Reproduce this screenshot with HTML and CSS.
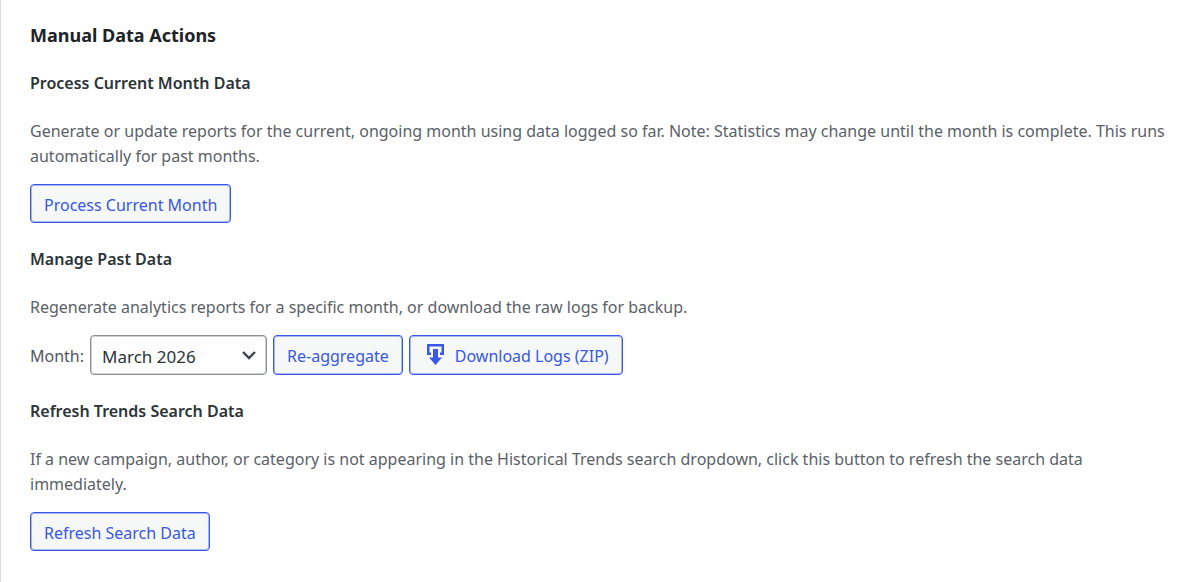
FILE: index.html
```html
<!DOCTYPE html>
<html lang="en">
<head>
<meta charset="utf-8">
<meta name="viewport" content="width=device-width, initial-scale=1">
<title>Manual Data Actions</title>
<link rel="stylesheet" href="styles.css">
</head>
<body>
<main class="panel">
  <h2 class="panel-title">Manual Data Actions</h2>
  <section class="section">
    <h3 class="section-title">Process Current Month Data</h3>
    <p class="text">Generate or update reports for the current, ongoing month using data logged so far. Note: Statistics may change until the month is complete. This runs automatically for past months.</p>
    <button class="button" type="button">Process Current Month</button>
  </section>
  <section class="section">
    <h3 class="section-title">Manage Past Data</h3>
    <p class="text">Regenerate analytics reports for a specific month, or download the raw logs for backup.</p>
    <form class="row">
      <label class="label" for="month">Month:</label>
      <span class="select-wrap">
        <select class="select" id="month"><option>March 2026</option></select>
        <svg class="chevron" viewBox="0 0 16 16" aria-hidden="true"><path d="M2 5l6 6 6-6" fill="none" stroke="currentColor" stroke-width="2.400"/></svg>
      </span>
      <button class="button" type="button">Re-aggregate</button>
      <button class="button" type="button">
        <svg class="icon" viewBox="0 0 24 24" aria-hidden="true"><path d="M4 1h17v11h-4V9.500h1.500V3.500h-12v6H8V12H4zM10 6h5v8.500h4l-6.500 7.500L6 14.500h4z" fill="currentColor"/></svg>
        Download Logs (ZIP)
      </button>
    </form>
  </section>
  <section class="section">
    <h3 class="section-title">Refresh Trends Search Data</h3>
    <p class="text">If a new campaign, author, or category is not appearing in the Historical Trends search dropdown, click this button to refresh the search data immediately.</p>
    <button class="button" type="button">Refresh Search Data</button>
  </section>
</main>
</body>
</html>
```
FILE: styles.css
```css
* { box-sizing: border-box; }
body {
  margin: 0;
  background: #fff;
  color: #50575e;
  font-family: "Noto Sans", "Open Sans", sans-serif;
  font-size: 16px;
  line-height: 25px;
}
.panel {
  min-height: 100vh;
  padding: 21px 30px 7px 29px;
  border-left: 1px solid #dcdcde;
}
.panel-title {
  margin: 0 0 22px;
  color: #1d2327;
  font-size: 18px;
  font-weight: 700;
  line-height: 28px;
}
.section { margin-bottom: 24px; }
.section-title {
  margin: 0 0 24px;
  color: #2c3338;
  font-size: 16px;
  font-weight: 600;
  line-height: 24px;
}
.text { margin: 0 0 15px; color: #5b6168; }
.row { display: flex; align-items: center; gap: 6px; }
.label { padding-top: 2px; }
.button {
  display: inline-flex;
  align-items: center;
  gap: 8px;
  min-height: 39px;
  padding: 4px 13px 0;
  border: 1px solid #3858e9;
  border-radius: 4px;
  background: #f6f7f7;
  box-shadow: inset 0 0 0 1px rgba(56, 88, 233, 0.4);
  color: #3858e9;
  font: inherit;
}
.row .button { min-height: 40px; padding-top: 2px; }
.icon { width: 24px; height: 24px; margin-bottom: 2px; }
.select-wrap { display: grid; align-items: center; }
.select {
  grid-area: 1 / 1;
  width: 177px;
  height: 40px;
  padding: 2px 32px 0 11px;
  border: 1px solid #8c8f94;
  border-radius: 4px;
  appearance: none;
  background: #fff;
  box-shadow: inset 0 0 0 1px rgba(140, 143, 148, 0.4);
  color: #2c3338;
  font: inherit;
  font-size: 17px;
}
.chevron {
  grid-area: 1 / 1;
  justify-self: end;
  width: 16px;
  height: 16px;
  margin-right: 10px;
  color: #3c434a;
  pointer-events: none;
}
```
